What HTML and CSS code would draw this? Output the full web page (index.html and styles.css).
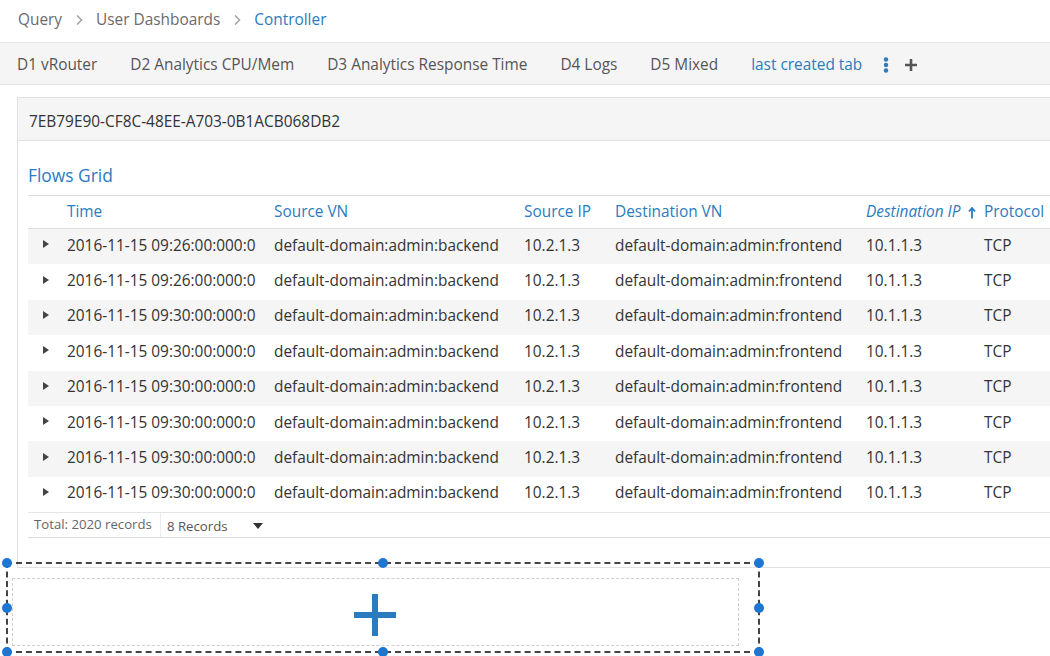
FILE: index.html
```html
<!DOCTYPE html>
<html>
<head>
<meta charset="utf-8">
<link rel="stylesheet" href="styles.css">
</head>
<body>
<nav class="breadcrumb">
  <span class="crumb">Query</span>
  <svg class="chev" viewBox="0 0 8 12" width="8" height="12"><path d="M2 1.5 L6.5 6 L2 10.5" fill="none" stroke="#a0a0a0" stroke-width="1.5"/></svg>
  <span class="crumb">User Dashboards</span>
  <svg class="chev" viewBox="0 0 8 12" width="8" height="12"><path d="M2 1.5 L6.5 6 L2 10.5" fill="none" stroke="#a0a0a0" stroke-width="1.5"/></svg>
  <span class="crumb current">Controller</span>
</nav>
<div class="tabs">
  <span class="tab">D1 vRouter</span>
  <span class="tab">D2 Analytics CPU/Mem</span>
  <span class="tab">D3 Analytics Response Time</span>
  <span class="tab">D4 Logs</span>
  <span class="tab">D5 Mixed</span>
  <span class="tab active">last created tab</span>
  <span class="tab-tools">
    <svg class="kebab" viewBox="0 0 6 16" width="6" height="16"><circle cx="3" cy="2.5" r="2.2" fill="#2b7bc0"/><circle cx="3" cy="8" r="2.2" fill="#2b7bc0"/><circle cx="3" cy="13.5" r="2.2" fill="#2b7bc0"/></svg>
    <svg class="add" viewBox="0 0 12 12" width="12" height="12"><path d="M6 0 V12 M0 6 H12" stroke="#555" stroke-width="2.6"/></svg>
  </span>
</div>
<main class="content">
  <section class="panel">
    <header class="panel-head">7EB79E90-CF8C-48EE-A703-0B1ACB068DB2</header>
    <div class="panel-body">
      <h2 class="grid-title">Flows Grid</h2>
      <div class="grid">
        <div class="row head">
          <span></span>
          <span>Time</span>
          <span>Source VN</span>
          <span>Source IP</span>
          <span>Destination VN</span>
          <span class="sorted"><i>Destination IP</i><svg class="sort" viewBox="0 0 8 12" width="8" height="12"><path d="M4 11.5 V2 M1 4.5 L4 1 L7 4.5" fill="none" stroke="#2b7bc0" stroke-width="1.8"/></svg></span>
          <span>Protocol</span>
        </div>
        <div class="row odd"><span class="exp"><b class="tri"></b></span><span>2016-11-15 09:26:00:000:0</span><span>default-domain:admin:backend</span><span>10.2.1.3</span><span>default-domain:admin:frontend</span><span>10.1.1.3</span><span>TCP</span></div>
        <div class="row"><span class="exp"><b class="tri"></b></span><span>2016-11-15 09:26:00:000:0</span><span>default-domain:admin:backend</span><span>10.2.1.3</span><span>default-domain:admin:frontend</span><span>10.1.1.3</span><span>TCP</span></div>
        <div class="row odd"><span class="exp"><b class="tri"></b></span><span>2016-11-15 09:30:00:000:0</span><span>default-domain:admin:backend</span><span>10.2.1.3</span><span>default-domain:admin:frontend</span><span>10.1.1.3</span><span>TCP</span></div>
        <div class="row"><span class="exp"><b class="tri"></b></span><span>2016-11-15 09:30:00:000:0</span><span>default-domain:admin:backend</span><span>10.2.1.3</span><span>default-domain:admin:frontend</span><span>10.1.1.3</span><span>TCP</span></div>
        <div class="row odd"><span class="exp"><b class="tri"></b></span><span>2016-11-15 09:30:00:000:0</span><span>default-domain:admin:backend</span><span>10.2.1.3</span><span>default-domain:admin:frontend</span><span>10.1.1.3</span><span>TCP</span></div>
        <div class="row"><span class="exp"><b class="tri"></b></span><span>2016-11-15 09:30:00:000:0</span><span>default-domain:admin:backend</span><span>10.2.1.3</span><span>default-domain:admin:frontend</span><span>10.1.1.3</span><span>TCP</span></div>
        <div class="row odd"><span class="exp"><b class="tri"></b></span><span>2016-11-15 09:30:00:000:0</span><span>default-domain:admin:backend</span><span>10.2.1.3</span><span>default-domain:admin:frontend</span><span>10.1.1.3</span><span>TCP</span></div>
        <div class="row"><span class="exp"><b class="tri"></b></span><span>2016-11-15 09:30:00:000:0</span><span>default-domain:admin:backend</span><span>10.2.1.3</span><span>default-domain:admin:frontend</span><span>10.1.1.3</span><span>TCP</span></div>
        <div class="grid-foot">
          <span class="total">Total: 2020 records</span>
          <span class="pager">8 Records <b class="caret"></b></span>
        </div>
      </div>
    </div>
  </section>
</main>
<div class="add-zone">
  <svg class="big-plus" viewBox="0 0 42 42" width="42" height="42"><path d="M21 0 V42 M0 21 H42" stroke="#2b7bc0" stroke-width="6"/></svg>
  <div class="selection">
    <span class="handle tl"></span><span class="handle tm"></span><span class="handle tr"></span>
    <span class="handle ml"></span><span class="handle mr"></span>
    <span class="handle bl"></span><span class="handle bm"></span><span class="handle br"></span>
  </div>
</div>
</body>
</html>
```

FILE: styles.css
```css
* { box-sizing: border-box; }
html, body { margin: 0; padding: 0; }
body {
  width: 1050px;
  height: 656px;
  overflow: hidden;
  font-family: "Open Sans", "Noto Sans", sans-serif;
  color: #333;
  background: #fff;
}

.breadcrumb {
  height: 43px;
  display: flex;
  align-items: center;
  padding: 0 0 4px 18px;
  border-bottom: 1px solid #e4e4e4;
  font-size: 15.4px;
}
.crumb { color: #6b6b6b; }
.crumb.current { color: #2b7bc0; }
.chev { margin: 2px 13px 0 13px; }

.tabs {
  height: 42px;
  display: flex;
  align-items: center;
  gap: 33px;
  padding: 2px 0 0 17px;
  background: #f5f5f5;
  border-bottom: 1px solid #e4e4e4;
  font-size: 15.4px;
}
.tab { color: #555; white-space: nowrap; }
.tab.active { color: #2b7bc0; }
.tab-tools {
  display: flex;
  align-items: center;
  gap: 16px;
  margin-left: -12px;
}

.content { padding: 12px 0 0 17px; }
.panel {
  border: 1px solid #e0e0e0;
  border-right: none;
  height: 471px;
}
.panel-head {
  height: 43px;
  display: flex;
  align-items: center;
  padding: 4px 0 0 11px;
  background: #f5f5f5;
  border-bottom: 1px solid #e0e0e0;
  font-size: 15.4px;
  color: #333;
}
.panel-body { padding: 20px 0 0 10px; }
.grid-title {
  margin: 0 0 6px 0;
  font-size: 17.4px;
  font-weight: normal;
  color: #2b7bc0;
  line-height: 28px;
}

.grid {
  border-top: 1px solid #dcdcdc;
  font-size: 15.4px;
}
.row {
  display: grid;
  grid-template-columns: 32px 207px 250px 91px 251px 118px 1fr;
  height: 35.4px;
  padding-bottom: 3px;
  align-items: center;
  white-space: nowrap;
}
.row > span { padding-left: 7px; }
.row.head {
  height: 33px;
  padding-bottom: 2px;
  color: #2b7bc0;
  border-bottom: 1px solid #dcdcdc;
}
.row.odd { background: #f5f5f5; }
.sorted { display: flex; align-items: center; gap: 0; }
.sorted i { font-style: italic; }
.sort { margin-left: 8px; margin-top: 3px; }
.exp { display: flex; align-items: center; padding-left: 15px !important; }
.tri {
  width: 0; height: 0;
  border-top: 4.5px solid transparent;
  border-bottom: 4.5px solid transparent;
  border-left: 6px solid #444;
  margin-top: -2px;
}

.grid-foot {
  height: 26px;
  display: flex;
  align-items: stretch;
  border-top: 1px solid #e4e4e4;
  border-bottom: 1px solid #dcdcdc;
  font-size: 13.2px;
  color: #666;
}
.total {
  display: flex;
  align-items: center;
  padding: 0 0 3px 6px;
  width: 133px;
  border-right: 1px solid #ececec;
}
.pager {
  display: flex;
  align-items: center;
  padding: 2px 0 0 6px;
  color: #555;
}
.caret {
  width: 0; height: 0;
  border-left: 5.5px solid transparent;
  border-right: 5.5px solid transparent;
  border-top: 6px solid #333;
  margin-left: 25px;
}

.add-zone {
  position: relative;
  margin: 10px 0 0 12px;
  width: 727px;
  height: 68px;
  border: 1px dashed #cfcfcf;
  display: flex;
  align-items: center;
  justify-content: center;
}
.big-plus { margin: 5px 0 0 -2px; }
.selection {
  position: absolute;
  left: -7px;
  top: -17px;
  width: 754px;
  height: 91px;
  border: 2px dashed #444;
}
.handle {
  position: absolute;
  width: 10px;
  height: 10px;
  border-radius: 50%;
  background: #1c76d2;
}
.tl { left: -6px; top: -6px; }
.tm { left: 370px; top: -6px; }
.tr { right: -6px; top: -6px; }
.ml { left: -6px; top: 39px; }
.mr { right: -6px; top: 39px; }
.bl { left: -6px; bottom: -6px; }
.bm { left: 370px; bottom: -6px; }
.br { right: -6px; bottom: -6px; }
```
